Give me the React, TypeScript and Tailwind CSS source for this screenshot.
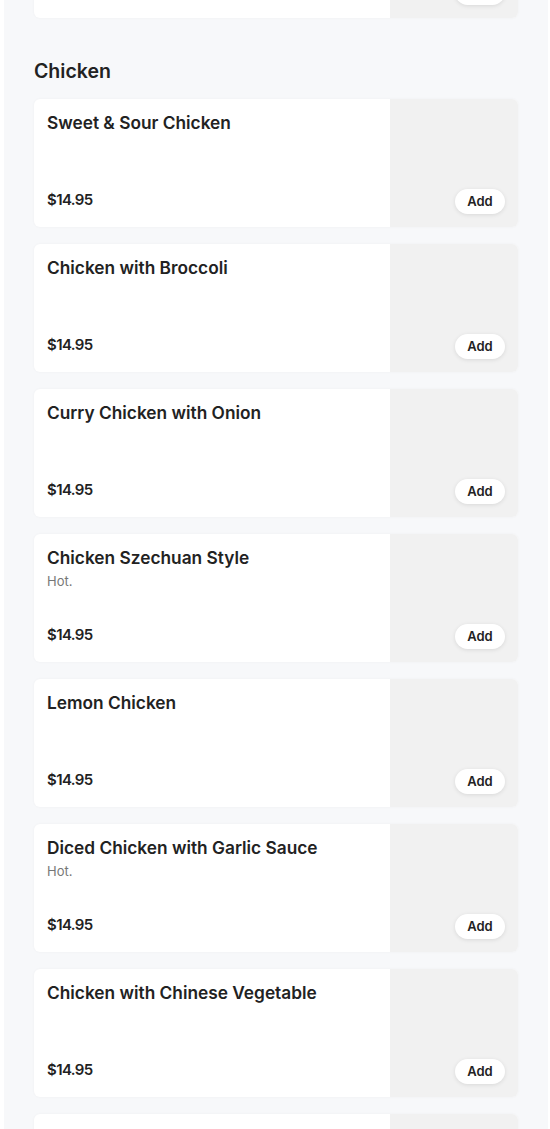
const items = [
  { name: "Sweet & Sour Chicken", price: "$14.95" },
  { name: "Chicken with Broccoli", price: "$14.95" },
  { name: "Curry Chicken with Onion", price: "$14.95" },
  { name: "Chicken Szechuan Style", desc: "Hot.", price: "$14.95" },
  { name: "Lemon Chicken", price: "$14.95" },
  { name: "Diced Chicken with Garlic Sauce", desc: "Hot.", price: "$14.95" },
  { name: "Chicken with Chinese Vegetable", price: "$14.95" },
  { name: "Moo Goo Gai Pan", price: "$14.95" },
];

type Item = { name: string; desc?: string; price: string };

function MenuCard({ item, className = "" }: { item: Item; className?: string }) {
  return (
    <div
      className={`flex h-[128px] rounded-[6px] overflow-hidden bg-white shadow-[0_0_3px_rgba(0,0,0,0.04)] ${className}`}
    >
      <div className="flex-1 flex flex-col justify-between px-[13px] pt-[12px] pb-[16px]">
        <div>
          <h3 className="text-[17.3px] leading-[24px] font-semibold text-[#222]">{item.name}</h3>
          {item.desc && <p className="text-[13px] leading-[20px] text-[#777] mt-[1px]">{item.desc}</p>}
        </div>
        <span className="text-[15px] leading-[22px] font-semibold text-[#222] tracking-[-0.6px]">{item.price}</span>
      </div>
      <div className="w-[128px] bg-[#f1f1f1] flex items-end justify-end p-[13px]">
        <button className="h-[25px] w-[50px] rounded-full bg-white text-[13px] font-semibold text-[#222] shadow-[0_1px_4px_rgba(0,0,0,0.1)]">
          Add
        </button>
      </div>
    </div>
  );
}

export default function App() {
  return (
    <div
      className="min-h-screen bg-white pl-[4px] pr-[2px] overflow-hidden"
      style={{ fontFamily: "Inter, 'Noto Sans', sans-serif" }}
    >
      <div className="bg-[#f7f8fa] px-[30px] pb-[40px] min-h-[1129px]">
        {/* tail of previous section */}
        <MenuCard item={{ name: "Egg Foo Young", price: "$14.95" }} className="-mt-[110px]" />

        {/* Chicken */}
        <h2 className="text-[19.5px] leading-[28px] font-semibold text-[#222] mt-[39px] mb-[14px]">Chicken</h2>
        <div className="flex flex-col gap-[17px]">
          {items.map((item) => (
            <MenuCard key={item.name} item={item} />
          ))}
        </div>
      </div>
    </div>
  );
}
